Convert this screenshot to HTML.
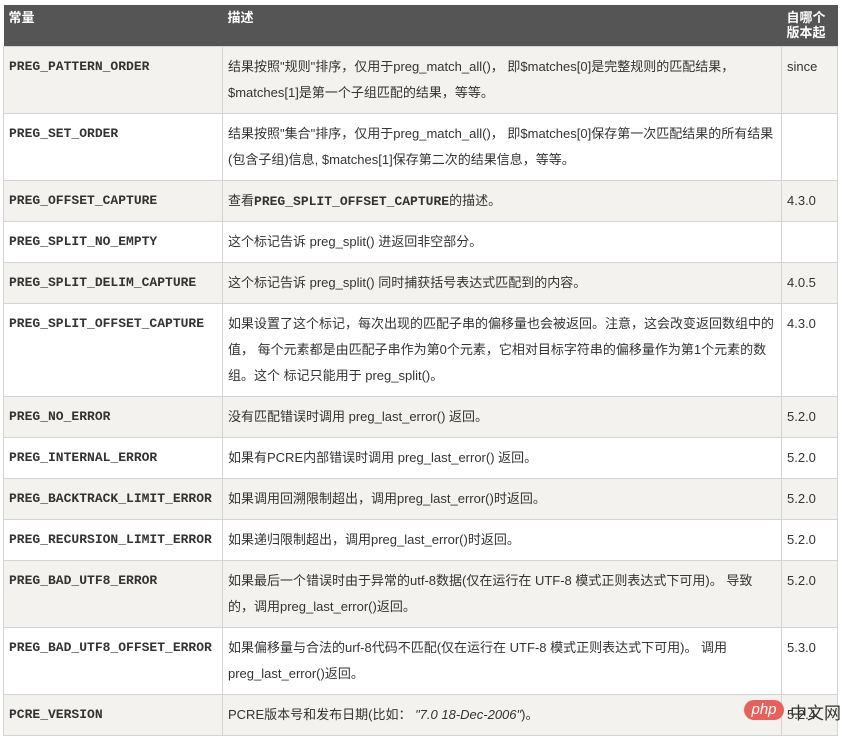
<!DOCTYPE html>
<html><head><meta charset="utf-8"><style>
body{margin:0;background:#fff;width:843px;height:740px;overflow:hidden;position:relative}
table{position:absolute;left:3px;top:5px;border-collapse:collapse;width:834px;table-layout:fixed;font-family:"Liberation Sans","Noto Sans CJK SC",sans-serif;font-size:13px;color:#333}
th{background:#555;color:#fff;text-align:left;vertical-align:top;font-weight:bold;padding:5px 5px 0;height:36px;font-size:13px;line-height:15px}
td{border:1px solid #d4d4d4;vertical-align:top;padding:7px 5px 0;line-height:26px;white-space:nowrap}
td.c{font-family:"Liberation Mono",monospace;font-weight:bold;font-size:13px;color:#333}
tr.l td{background:#f3f2ee}
</style></head><body>
<table>
<colgroup><col style="width:219px"><col style="width:559px"><col style="width:56px"></colgroup>
<tr><th>常量</th><th>描述</th><th>自哪个<br>版本起</th></tr>
<tr class="l" style="height:67px"><td class="c">PREG_PATTERN_ORDER</td><td>结果按照"规则"排序，仅用于preg_match_all()， 即$matches[0]是完整规则的匹配结果，<br>$matches[1]是第一个子组匹配的结果，等等。</td><td>since</td></tr>
<tr style="height:67px"><td class="c">PREG_SET_ORDER</td><td>结果按照"集合"排序，仅用于preg_match_all()， 即$matches[0]保存第一次匹配结果的所有结果<br>(包含子组)信息, $matches[1]保存第二次的结果信息，等等。</td><td></td></tr>
<tr class="l" style="height:41px"><td class="c">PREG_OFFSET_CAPTURE</td><td>查看<b style="font-family:'Liberation Mono',monospace;font-size:13px">PREG_SPLIT_OFFSET_CAPTURE</b>的描述。</td><td>4.3.0</td></tr>
<tr style="height:41px"><td class="c">PREG_SPLIT_NO_EMPTY</td><td>这个标记告诉 preg_split() 进返回非空部分。</td><td></td></tr>
<tr class="l" style="height:41px"><td class="c">PREG_SPLIT_DELIM_CAPTURE</td><td>这个标记告诉 preg_split() 同时捕获括号表达式匹配到的内容。</td><td>4.0.5</td></tr>
<tr style="height:93px"><td class="c">PREG_SPLIT_OFFSET_CAPTURE</td><td>如果设置了这个标记，每次出现的匹配子串的偏移量也会被返回。注意，这会改变返回数组中的<br>值， 每个元素都是由匹配子串作为第0个元素，它相对目标字符串的偏移量作为第1个元素的数<br>组。这个 标记只能用于 preg_split()。</td><td>4.3.0</td></tr>
<tr class="l" style="height:41px"><td class="c">PREG_NO_ERROR</td><td>没有匹配错误时调用 preg_last_error() 返回。</td><td>5.2.0</td></tr>
<tr style="height:41px"><td class="c">PREG_INTERNAL_ERROR</td><td>如果有PCRE内部错误时调用 preg_last_error() 返回。</td><td>5.2.0</td></tr>
<tr class="l" style="height:41px"><td class="c">PREG_BACKTRACK_LIMIT_ERROR</td><td>如果调用回溯限制超出，调用preg_last_error()时返回。</td><td>5.2.0</td></tr>
<tr style="height:41px"><td class="c">PREG_RECURSION_LIMIT_ERROR</td><td>如果递归限制超出，调用preg_last_error()时返回。</td><td>5.2.0</td></tr>
<tr class="l" style="height:67px"><td class="c">PREG_BAD_UTF8_ERROR</td><td>如果最后一个错误时由于异常的utf-8数据(仅在运行在 UTF-8 模式正则表达式下可用)。 导致<br>的，调用preg_last_error()返回。</td><td>5.2.0</td></tr>
<tr style="height:67px"><td class="c">PREG_BAD_UTF8_OFFSET_ERROR</td><td>如果偏移量与合法的urf-8代码不匹配(仅在运行在 UTF-8 模式正则表达式下可用)。 调用<br>preg_last_error()返回。</td><td>5.3.0</td></tr>
<tr class="l" style="height:41px"><td class="c">PCRE_VERSION</td><td>PCRE版本号和发布日期(比如： <i>"7.0 18-Dec-2006"</i>)。</td><td>5.2.4</td></tr>
</table>
<div style="position:absolute;left:744px;top:700px;width:40px;height:20px;border-radius:10px;background:#e8605c;color:#fff;font:italic 15px 'Liberation Sans',sans-serif;text-align:center;line-height:19px">php</div>
<div style="position:absolute;left:790px;top:699px;font:17px 'Liberation Sans','Noto Sans CJK SC',sans-serif;color:#333">中文网</div>
</body></html>
